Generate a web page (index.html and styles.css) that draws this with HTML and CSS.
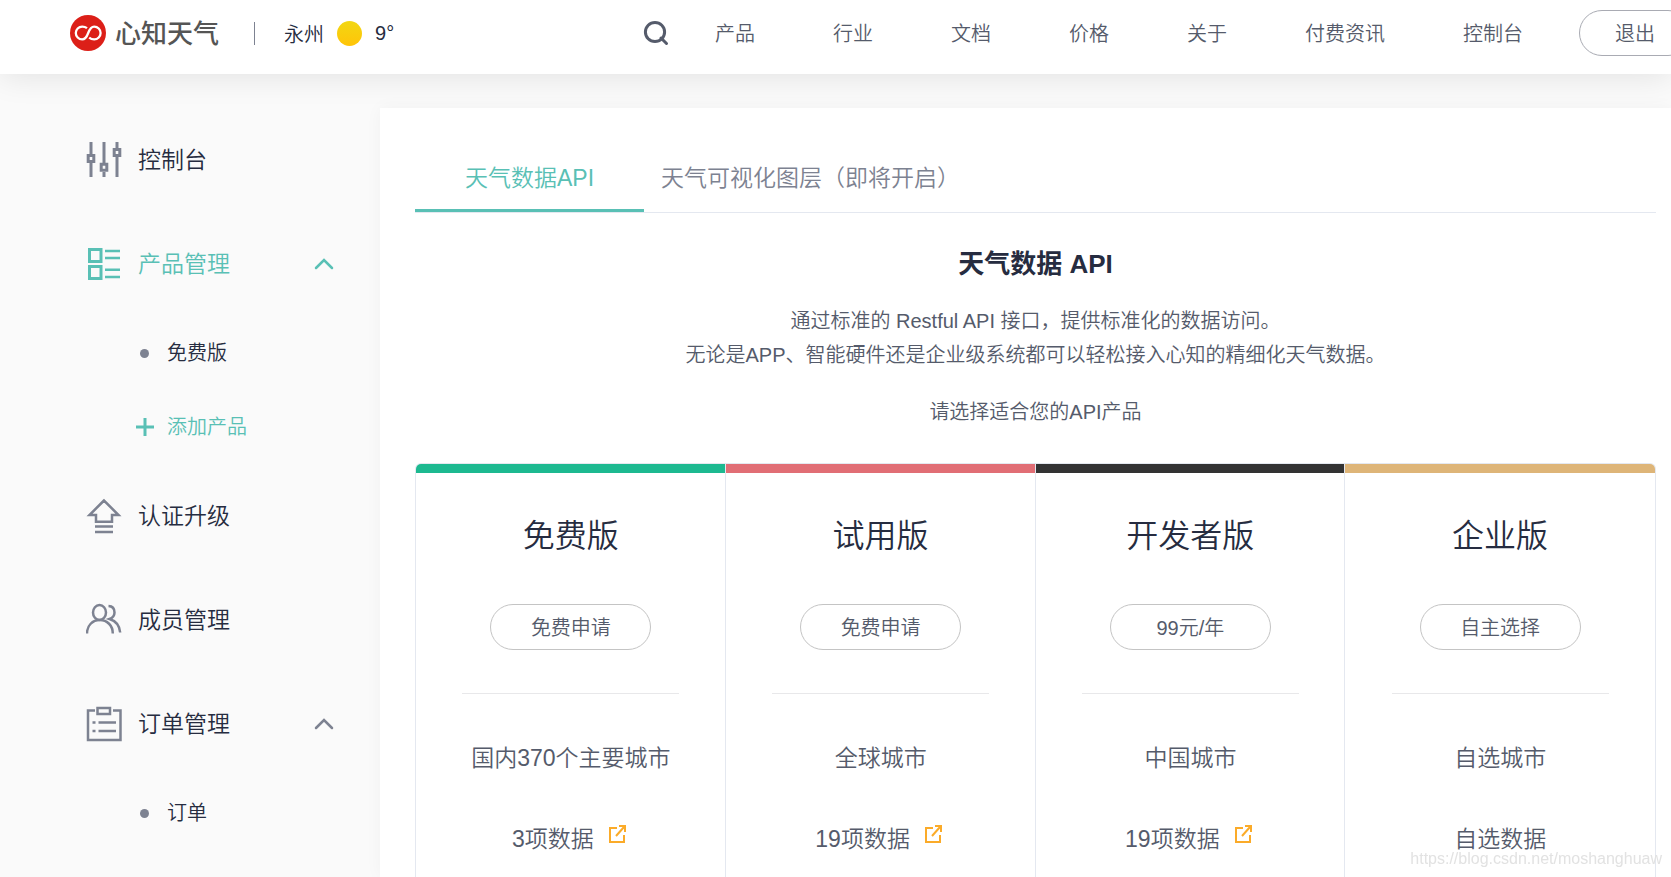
FILE: index.html
```html
<!DOCTYPE html>
<html lang="zh-CN">
<head>
<meta charset="utf-8">
<meta name="viewport" content="width=device-width, initial-scale=1">
<title>心知天气 - 添加产品</title>
<link rel="stylesheet" href="styles.css">
</head>
<body>
<header class="topbar">
  <a class="brand" href="#">
    <svg class="brand-mark" viewBox="0 0 36 36" aria-hidden="true">
      <circle cx="18" cy="18" r="18" fill="#dc1f18"/>
      <path d="M17 13.200C15.500 12 14 11.600 12.200 11.600a6.400 6.400 0 0 0 0 12.800c3.200 0 4.600-2.600 6-6.400S21.400 11.600 24.200 11.600a6.400 6.400 0 0 1 0 12.800c-2 0-3.600-.6-5-1.800" fill="none" stroke="#fff" stroke-width="2.300"/>
    </svg>
    <span class="brand-name">心知天气</span>
  </a>
  <div class="weather">
    <span>永州</span>
    <span class="sun"></span>
    <span>9°</span>
  </div>
  <nav class="topnav">
    <button class="search" type="button" aria-label="搜索">
      <svg viewBox="0 0 26 26" aria-hidden="true"><circle cx="12" cy="12" r="9.600"/><path d="M18 18l5.500 5.500"/></svg>
    </button>
    <a href="#">产品</a>
    <a href="#">行业</a>
    <a href="#">文档</a>
    <a href="#">价格</a>
    <a href="#">关于</a>
    <a href="#">付费资讯</a>
    <a href="#">控制台</a>
    <button class="pill logout" type="button">退出</button>
  </nav>
</header>

<div class="layout">
  <aside class="sidebar">
    <a class="side-item" href="#">
      <svg class="side-icon" viewBox="0 0 36 36" aria-hidden="true"><g stroke-width="3"><path d="M5 0v12M5 21v14M18 0v21M18 30v5M31 0v6M31 15v20"/><path d="M2.200 13.500h5.600v6H2.200zM15.200 22.200h5.600v6h-5.600zM28.200 7.500h5.600v6h-5.600z"/></g></svg>
      <span>控制台</span>
    </a>
    <button class="side-item active" type="button" aria-expanded="true">
      <svg class="side-icon" viewBox="0 0 36 36" aria-hidden="true"><path stroke-width="3" d="M3.500 3.500h11.500v12H3.500zM3.500 20.500h11.500v12H3.500z"/><path d="M19 5h15M19 12h15M19 23.700h15M19 31h15"/></svg>
      <span>产品管理</span>
      <svg class="chevron" viewBox="0 0 20 12" aria-hidden="true"><path d="M2 10l8-8 8 8"/></svg>
    </button>
    <a class="sub-item" href="#"><i class="marker"><i class="dot"></i></i><span>免费版</span></a>
    <a class="sub-item active" href="#"><i class="marker"><svg class="plus" viewBox="0 0 18 18" aria-hidden="true"><path d="M9 0v18M0 9h18"/></svg></i><span>添加产品</span></a>
    <a class="side-item" href="#">
      <svg class="side-icon" viewBox="0 0 36 36" aria-hidden="true"><path d="M18 2.500L3.500 17H10v6.800h16V17h6.500zM9 28.500h18M9 34h18"/></svg>
      <span>认证升级</span>
    </a>
    <a class="side-item" href="#">
      <svg class="side-icon" viewBox="0 0 36 36" aria-hidden="true"><ellipse cx="13.500" cy="10.500" rx="6.500" ry="7.500"/><path d="M1 31.500C1 23.500 6.500 18 13.800 18s13 5.500 13 13.500M22.500 4c4 .2 6 3 6 6.500 0 3-1.700 5.300-5 6.500 6 1.800 10 6.500 10.700 13.500"/></svg>
      <span>成员管理</span>
    </a>
    <button class="side-item" type="button" aria-expanded="true">
      <svg class="side-icon" viewBox="0 0 36 36" aria-hidden="true"><path d="M9 4.500H2v29.500h32.500V4.500H27M11.500 2H24v6H11.500zM12.500 16.500h17.500M12.500 25h17.500M6.500 16.500h3M6.500 25h3"/></svg>
      <span>订单管理</span>
      <svg class="chevron" viewBox="0 0 20 12" aria-hidden="true"><path d="M2 10l8-8 8 8"/></svg>
    </button>
    <a class="sub-item" href="#"><i class="marker"><i class="dot"></i></i><span>订单</span></a>
  </aside>

  <main class="panel">
    <div class="tabs" role="tablist">
      <button class="tab selected" role="tab" aria-selected="true" type="button">天气数据API</button>
      <button class="tab" role="tab" aria-selected="false" type="button">天气可视化图层（即将开启）</button>
    </div>
    <section class="intro">
      <h1>天气数据 API</h1>
      <p>通过标准的 Restful API 接口，提供标准化的数据访问。<br>无论是APP、智能硬件还是企业级系统都可以轻松接入心知的精细化天气数据。</p>
      <p>请选择适合您的API产品</p>
    </section>
    <section class="plans">
      <article class="plan free">
        <h2>免费版</h2>
        <button class="pill" type="button">免费申请</button>
        <ul>
          <li>国内370个主要城市</li>
          <li>3项数据<a class="open" href="#" aria-label="查看数据"><svg viewBox="0 0 17 18" aria-hidden="true"><path d="M8 3H1v14h14V10M7 11l8-9M10 1h6v6"/></svg></a></li>
        </ul>
      </article>
      <article class="plan trial">
        <h2>试用版</h2>
        <button class="pill" type="button">免费申请</button>
        <ul>
          <li>全球城市</li>
          <li>19项数据<a class="open" href="#" aria-label="查看数据"><svg viewBox="0 0 17 18" aria-hidden="true"><path d="M8 3H1v14h14V10M7 11l8-9M10 1h6v6"/></svg></a></li>
        </ul>
      </article>
      <article class="plan developer">
        <h2>开发者版</h2>
        <button class="pill" type="button">99元/年</button>
        <ul>
          <li>中国城市</li>
          <li>19项数据<a class="open" href="#" aria-label="查看数据"><svg viewBox="0 0 17 18" aria-hidden="true"><path d="M8 3H1v14h14V10M7 11l8-9M10 1h6v6"/></svg></a></li>
        </ul>
      </article>
      <article class="plan enterprise">
        <h2>企业版</h2>
        <button class="pill" type="button">自主选择</button>
        <ul>
          <li>自选城市</li>
          <li>自选数据</li>
        </ul>
      </article>
    </section>
  </main>
</div>
<div class="watermark">https://blog.csdn.net/moshanghuaw</div>
</body>
</html>
```
FILE: styles.css
```css
* { box-sizing: border-box; }

body {
  margin: 0;
  height: 100vh;
  display: flex;
  flex-direction: column;
  overflow: hidden;
  background: #fafafa;
  color: #262c40;
  font-family: "Liberation Sans", "Noto Sans CJK SC", sans-serif;
  font-size: 20px;
  font-weight: 350;
}

a { color: inherit; text-decoration: none; }

button {
  margin: 0;
  padding: 0;
  border: 0;
  background: none;
  color: inherit;
  font: inherit;
  cursor: pointer;
}

svg { display: block; fill: none; stroke: currentColor; }
h1, h2, p, ul { margin: 0; padding: 0; }

/* Top bar */
.topbar {
  position: relative;
  z-index: 1;
  flex: none;
  display: flex;
  align-items: center;
  height: 74px;
  padding: 0 0 8px 70px;
  background: #fff;
  box-shadow: 0 2px 32px rgba(0, 0, 0, 0.1);
}

.brand { display: flex; align-items: center; gap: 9px; }
.brand-mark { width: 36px; height: 36px; stroke: none; }
.brand-name { padding-top: 2px; color: #555; font-size: 26px; font-weight: 500; line-height: 36px; }

.weather {
  display: flex;
  align-items: center;
  gap: 13px;
  height: 23px;
  margin-left: 35px;
  padding-left: 29px;
  border-left: 1px solid #7d8291;
  white-space: nowrap;
}

.sun {
  width: 25px;
  height: 25px;
  border-radius: 50%;
  background: linear-gradient(#f2d713, #ffc408);
}

.topnav {
  display: flex;
  flex: none;
  align-items: center;
  gap: 78px;
  margin-left: auto;
  margin-right: -20px;
  color: #555b6b;
  white-space: nowrap;
}

.topnav > a { padding-bottom: 2px; }

.search { width: 26px; height: 26px; margin-right: -32px; }
.search svg { width: 26px; height: 26px; stroke-width: 3; stroke-linecap: round; }

.pill {
  height: 46px;
  padding: 0 35px 2px;
  border: 1px solid #c4c4c4;
  border-radius: 23px;
  color: #555b6b;
}

.logout { margin-left: -22px; border-color: #a9abb3; }

/* Layout */
.layout {
  flex: 1;
  display: flex;
  min-height: 0;
}

.sidebar {
  flex: none;
  width: 380px;
  padding-top: 34px;
}

.side-item {
  display: flex;
  align-items: center;
  width: 100%;
  height: 104px;
  padding: 0 46px 0 86px;
  gap: 16px;
  font-size: 23px;
}

.side-item span { padding-bottom: 5px; }
.sub-item span { padding-bottom: 4px; }

.side-icon { width: 36px; height: 36px; color: #7d8291; stroke-width: 2.500; }
.chevron { width: 20px; height: 12px; margin-left: auto; color: #7d8291; stroke-width: 2.500; stroke-linecap: round; }

.sub-item {
  display: flex;
  align-items: center;
  height: 74px;
  padding-left: 134px;
  gap: 12px;
}

.marker { display: flex; justify-content: center; width: 21px; }
.dot { width: 9px; height: 9px; border-radius: 50%; background: #7d8291; }
.plus { width: 18px; height: 18px; stroke-width: 3; }

.active,
.active .side-icon,
.active .chevron { color: #59c0b5; }

/* Content panel */
.panel {
  flex: 1;
  display: flex;
  flex-direction: column;
  min-width: 0;
  margin-top: 34px;
  padding: 34px 15px 0 35px;
  background: #fff;
  box-shadow: 0 0 16px rgba(0, 0, 0, 0.04);
}

.tabs {
  flex: none;
  display: flex;
  gap: 17px;
  border-bottom: 1px solid #e4e8f0;
}

.tab {
  height: 70px;
  border-bottom: 3px solid transparent;
  color: #7d8291;
  font-size: 23px;
}

.tab.selected {
  padding: 0 50px;
  border-color: #59c0b5;
  color: #59c0b5;
}

.intro {
  flex: none;
  padding-top: 31px;
  color: #555b6b;
  line-height: 34px;
  text-align: center;
}

.intro h1 {
  margin-bottom: 20px;
  color: #262c40;
  font-size: 26px;
  font-weight: 700;
  line-height: 40px;
}

.intro p { margin-bottom: 23px; }

/* Plans */
.plans {
  flex: 1;
  display: grid;
  grid-template-columns: repeat(4, 1fr);
  margin-top: 11px;
  border: 1px solid #e4e8f0;
  border-bottom: 0;
  border-radius: 6px 6px 0 0;
  overflow: hidden;
}

.plan {
  display: flex;
  flex-direction: column;
  align-items: center;
  border-top: 9px solid;
  text-align: center;
}

.plan + .plan { box-shadow: -1px 0 #e4e8f0; }

.free { border-top-color: #1db990; }
.trial { border-top-color: #e16e75; }
.developer { border-top-color: #333; }
.enterprise { border-top-color: #deb578; }

.plan h2 {
  margin: 39px 0 44px;
  font-size: 32px;
  font-weight: 350;
  line-height: 48px;
}

.plan .pill { min-width: 161px; }

.plan ul {
  width: 70%;
  margin-top: 43px;
  padding-top: 21px;
  border-top: 1px solid #e8e8ea;
  color: #555b6b;
  font-size: 23px;
  list-style: none;
}

.plan li {
  display: flex;
  align-items: center;
  justify-content: center;
  height: 81px;
  white-space: nowrap;
}

.open { margin: 0 4px 5px 15px; color: #fbab29; }
.open svg { width: 17px; height: 18px; stroke-width: 2; }

.watermark {
  position: fixed;
  right: 9px;
  bottom: 8px;
  z-index: 2;
  color: #e2e2e2;
  font-size: 16px;
  line-height: 20px;
}
```
